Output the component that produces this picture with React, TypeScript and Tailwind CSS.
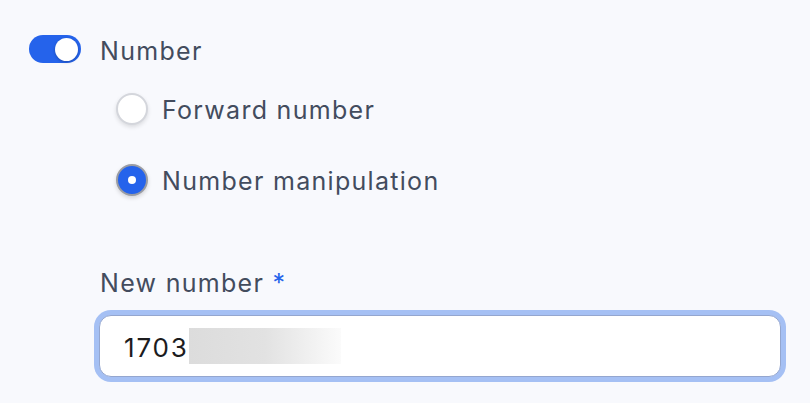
export default function App() {
  return (
    <div className="w-[810px] h-[403px] overflow-hidden bg-[#f8f9fd] text-[#434c5e]" style={{ fontFamily: 'Inter, "Noto Sans", sans-serif' }}>
      <div className="pl-[29px] pt-[35px]">
        <div className="flex items-center gap-[19px]">
          <button className="relative w-[52px] h-[28px] rounded-full bg-[#2563eb] shrink-0">
            <span className="absolute right-[3px] top-[2.5px] w-[23px] h-[23px] rounded-full bg-white shadow-[0_1px_3px_rgba(0,0,0,0.25)]" />
          </button>
          <span className="text-[25px] leading-[28px] tracking-[1.3px] translate-y-[2px]">Number</span>
        </div>

        <div className="ml-[87px] mt-[30px] flex flex-col gap-[39px]">
          <label className="flex items-center gap-[14px]">
            <span className="w-[32px] h-[32px] rounded-full bg-white border-2 border-[#d4d6dc] shadow-[0_2px_4px_rgba(0,0,0,0.12)] shrink-0" />
            <span className="text-[25px] leading-[32px] tracking-[1.3px] translate-y-[1px]">Forward number</span>
          </label>
          <label className="flex items-center gap-[14px]">
            <span className="w-[32px] h-[32px] rounded-full bg-[#2563eb] border-2 border-[#9a9ca3] shadow-[0_2px_4px_rgba(0,0,0,0.15)] shrink-0 flex items-center justify-center">
              <span className="w-[8px] h-[8px] rounded-full bg-white" />
            </span>
            <span className="text-[25px] leading-[32px] tracking-[1.3px] translate-y-[1px]">Number manipulation</span>
          </label>
        </div>

        <div className="ml-[70px] mt-[72px]">
          <div className="pl-[1px] text-[25px] leading-[30px] tracking-[1.3px]">
            New number <span className="text-[#2563eb]">*</span>
          </div>
          <div className="mt-[17px] w-[682px] h-[62px] rounded-[12px] bg-white border border-[#94a6cf] ring-[5px] ring-[#a5c0f4] flex items-center pl-[24px]">
            <span className="text-[26px] text-[#1c1c1e] tracking-[1.8px] translate-y-[1px]">1703</span>
            <span className="w-[152px] h-[36px] bg-gradient-to-r from-[#dcdcdc] via-[#e2e2e2] to-[#fbfbfb]" />
          </div>
        </div>
      </div>
    </div>
  )
}
